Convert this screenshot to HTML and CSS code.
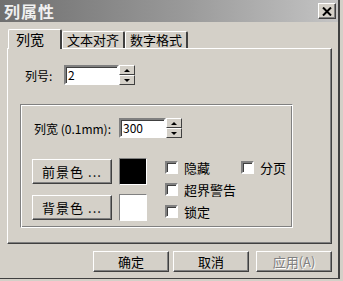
FILE: index.html
```html
<!DOCTYPE html>
<html lang="zh-CN">
<head>
    <meta charset="UTF-8">
    <title>列属性</title>
    <link rel="stylesheet" href="styles.css">
</head>
<body>
    <div class="dialog">
        <!-- Title bar -->
        <div class="titlebar">
            <span class="title">列属性</span>
            <a class="close-btn">
                <svg width="10" height="9" viewBox="0 0 10 9"><path d="M1 0.5 L9 8.5 M9 0.5 L1 8.5" stroke="#000" stroke-width="2"/></svg>
            </a>
        </div>

        <div class="dialog-body">
            <div class="tabs">
                <div class="tab active">列宽</div>
                <div class="tab">文本对齐</div>
                <div class="tab">数字格式</div>
            </div>

            <div class="panel">
                <div class="field-row">
                    <span class="label">列号:</span>
                    <div class="spin">
                        <div class="input w-num">2</div>
                        <div class="spin-btns">
                            <span class="spin-btn"><i class="arrow up"></i></span>
                            <span class="spin-btn"><i class="arrow down"></i></span>
                        </div>
                    </div>
                </div>

                <div class="group">
                    <div class="field-row">
                        <span class="label">列宽 (0.1mm):</span>
                        <div class="spin">
                            <div class="input w-width">300</div>
                            <div class="spin-btns">
                                <span class="spin-btn"><i class="arrow up"></i></span>
                                <span class="spin-btn"><i class="arrow down"></i></span>
                            </div>
                        </div>
                    </div>

                    <div class="options">
                        <div class="colors">
                            <div class="color-row">
                                <a class="btn color-btn">前景色 ...</a>
                                <span class="swatch black"></span>
                            </div>
                            <div class="color-row">
                                <a class="btn color-btn">背景色 ...</a>
                                <span class="swatch white"></span>
                            </div>
                        </div>
                        <div class="checks">
                            <div class="check-row">
                                <label class="check"><span class="box"></span>隐藏</label>
                                <label class="check page"><span class="box"></span>分页</label>
                            </div>
                            <label class="check"><span class="box"></span>超界警告</label>
                            <label class="check"><span class="box"></span>锁定</label>
                        </div>
                    </div>
                </div>
            </div>

            <!-- Footer buttons -->
            <div class="footer">
                <a class="btn footer-btn">确定</a>
                <a class="btn footer-btn">取消</a>
                <a class="btn footer-btn disabled">应用(A)</a>
            </div>
        </div>
    </div>
</body>
</html>
```

FILE: styles.css
```css
/* Classic dialog look */
body {
    margin: 0;
    padding: 0;
    background: #d4d0c8;
    font-family: "Noto Sans CJK SC", "DejaVu Sans", sans-serif;
    font-size: 12px;
    color: #000;
}

.dialog {
    width: 338px;
    height: 278px;
    background: #d4d0c8;
    border-right: 2px solid #404040;
    border-bottom: 1px solid #404040;
}

.titlebar {
    height: 22px;
    background: linear-gradient(to right, #6f6f6f, #9a9a9a 55%, #c4c4c4);
    display: flex;
    align-items: center;
    justify-content: space-between;
    padding: 0 2px 0 4px;
}

.title {
    color: #f0f0f0;
    font-weight: bold;
    font-size: 16px;
    letter-spacing: 1px;
    line-height: 22px;
}

.close-btn {
    width: 16px;
    height: 14px;
    background: #d4d0c8;
    border: 1px solid;
    border-color: #fff #404040 #404040 #fff;
    box-shadow: inset -1px -1px 0 #808080;
    display: flex;
    align-items: center;
    justify-content: center;
}

.dialog-body {
    padding: 7px 0 0 7px;
}

.tabs {
    display: flex;
    height: 19px;
    padding-left: 1px;
    align-items: flex-end;
}

.tab {
    height: 16px;
    line-height: 16px;
    padding: 0 4px;
    border-top: 1px solid #fff;
    border-left: 1px solid #fff;
    border-right: 2px solid #404040;
    border-radius: 2px 2px 0 0;
    font-size: 13px;
}

.tab.active {
    height: 19px;
    line-height: 18px;
    padding: 0 16px 0 7px;
    margin-bottom: -1px;
    background: #d4d0c8;
    position: relative;
    z-index: 1;
    font-size: 14px;
}

.panel {
    border: 1px solid;
    border-color: #fff #404040 #404040 #fff;
    box-shadow: inset -1px -1px 0 #808080;
    padding: 0 0 0 12px;
    box-sizing: border-box;
    width: 325px;
    height: 196px;
}

.field-row {
    display: flex;
    align-items: center;
}

.panel > .field-row {
    margin-top: 16px;
    margin-left: 5px;
}

.label {
    font-size: 12px;
    margin-right: 5px;
}

.panel > .field-row .label {
    width: 34px;
}

.spin {
    display: flex;
}

.input {
    height: 16px;
    line-height: 16px;
    background: #fff;
    border: 2px solid;
    border-color: #808080 #fff #fff #808080;
    box-shadow: inset 1px 1px 0 #404040;
    padding-left: 2px;
    font-size: 12px;
}

.w-num {
    width: 49px;
}

.w-width {
    width: 41px;
}

.spin-btns {
    display: flex;
    flex-direction: column;
    width: 16px;
    height: 20px;
}

.spin-btn {
    flex: 1;
    background: #d4d0c8;
    border: 1px solid;
    border-color: #fff #404040 #404040 #fff;
    box-sizing: border-box;
    display: flex;
    align-items: center;
    justify-content: center;
}

.arrow {
    width: 0;
    height: 0;
    border-left: 3px solid transparent;
    border-right: 3px solid transparent;
}

.arrow.up {
    border-bottom: 3px solid #000;
}

.arrow.down {
    border-top: 3px solid #000;
}

.group {
    margin-top: 19px;
    width: 273px;
    height: 124px;
    border: 1px solid;
    border-color: #808080 #fff #fff #808080;
    box-shadow: 1px 1px 0 #fff inset, -1px -1px 0 #808080 inset;
    box-sizing: border-box;
    padding: 13px 0 0 11px;
}

.group .field-row .label {
    margin-left: 2px;
    width: 80px;
}

.options {
    display: flex;
    margin-top: 20px;
}

.colors {
    display: flex;
    flex-direction: column;
    gap: 9px;
}

.color-row {
    display: flex;
    align-items: center;
    gap: 7px;
}

.btn {
    display: flex;
    align-items: center;
    justify-content: center;
    background: #d4d0c8;
    border: 1px solid;
    border-color: #fff #404040 #404040 #fff;
    box-shadow: inset -1px -1px 0 #808080;
    box-sizing: border-box;
    font-size: 13px;
}

.color-btn {
    width: 80px;
    height: 25px;
    letter-spacing: 1px;
}

.swatch {
    width: 28px;
    height: 27px;
    border: 1px solid;
    border-color: #808080 #fff #fff #808080;
    box-sizing: border-box;
}

.swatch.black {
    background: #000;
}

.swatch.white {
    background: #fff;
}

.checks {
    display: flex;
    flex-direction: column;
    gap: 7px;
    margin-left: 18px;
    margin-top: 2px;
}

.check-row {
    display: flex;
}

.check {
    display: flex;
    align-items: center;
    height: 15px;
    font-size: 13px;
}

.check.page {
    margin-left: 31px;
}

.box {
    width: 9px;
    height: 9px;
    background: #fff;
    border: 2px solid;
    border-color: #808080 #fff #fff #808080;
    box-shadow: inset 1px 1px 0 #404040;
    margin-right: 6px;
}

.footer {
    display: flex;
    justify-content: flex-end;
    gap: 4px;
    margin-top: 7px;
    padding-right: 6px;
}

.footer-btn {
    width: 76px;
    height: 21px;
    font-size: 13px;
}

.footer-btn.disabled {
    margin-left: 3px;
    color: #808080;
    text-shadow: 1px 1px 0 #fff;
}
```
